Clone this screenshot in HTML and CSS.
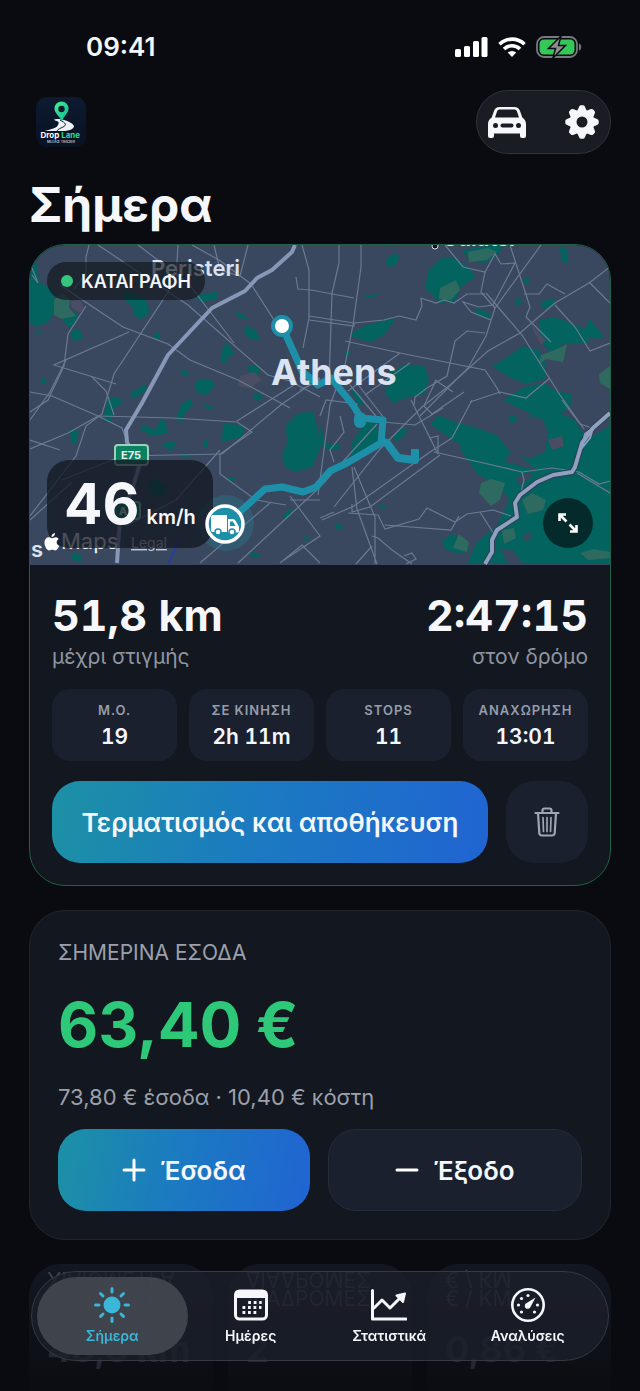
FILE: index.html
```
<!DOCTYPE html>
<html lang="el">
<head>
    <meta charset="UTF-8">
    <meta name="viewport" content="width=device-width, initial-scale=1">
    <title>Drop Lane</title>
    <link rel="stylesheet" href="styles.css">
</head>
<body>
    <div class="status">
        <span class="time">09:41</span>
        <div class="status-icons">
            <svg width="33" height="20" viewBox="0 0 33 20" fill="#fff">
                <rect x="0" y="12" width="6" height="8" rx="1.6"/>
                <rect x="9" y="9" width="6" height="11" rx="1.6"/>
                <rect x="18" y="4" width="6" height="16" rx="1.6"/>
                <rect x="26.500" y="0" width="6" height="20" rx="1.6"/>
            </svg>
            <svg width="28" height="20" viewBox="0 0 28 20" fill="none" stroke="#fff" stroke-width="3.6">
                <path d="M1.500 7.200a18 18 0 0 1 25 0"/>
                <path d="M6 12a11.500 11.500 0 0 1 16 0"/>
                <path d="M14 20l-4.200-4.400a6 6 0 0 1 8.400 0z" fill="#fff" stroke="none"/>
            </svg>
            <svg width="46" height="22" viewBox="0 0 46 22">
                <rect x="1" y="1" width="40" height="20" rx="7" fill="none" stroke="#77797c" stroke-width="1.8"/>
                <rect x="3.500" y="3.500" width="35" height="15" rx="4.500" fill="#34c759"/>
                <path d="M43 7.500c3 1 3 6 0 7z" fill="#77797c"/>
                <path d="M25 0L12.500 12.500h7L17 22 29.500 9.500h-7z" fill="#8b8d90" stroke="#090b10" stroke-width="1.500"/>
            </svg>
        </div>
    </div>

    <header>
        <svg class="logo" viewBox="0 0 50 50">
            <defs>
                <linearGradient id="pin" x1="0" y1="0" x2="1" y2="1">
                    <stop offset="0" stop-color="#4cf08f"/>
                    <stop offset="1" stop-color="#06b99a"/>
                </linearGradient>
                <linearGradient id="logoBg" x1="0" y1="0" x2="0" y2="1">
                    <stop offset="0" stop-color="#0d1a30"/>
                    <stop offset="1" stop-color="#071222"/>
                </linearGradient>
            </defs>
            <rect width="50" height="50" rx="11" fill="url(#logoBg)"/>
            <path d="M21 24c-4-1-4-2 2-2 7 1 14 4 15 7 0 3-5 5-12 5H9c6-2 12-3 13-6 1-2 1-3-1-4z" fill="#eef2f6"/>
            <path d="M24 23c6 3 7 5 3 7-2 1-5 2-6 4" fill="none" stroke="#0a1626" stroke-width="1"/>
            <path d="M26 24c-3-5-7.500-8-7.500-12.500a7 7 0 0 1 14 0C32.500 16 28 19 26 24z" fill="url(#pin)"/>
            <circle cx="25.500" cy="12" r="3.200" fill="#0c1a2c"/>
            <text x="4.500" y="41" class="logo-name" fill="#fff">Drop <tspan fill="#22dd96">Lane</tspan></text>
            <text x="25" y="46" class="logo-sub" fill="#c9d0da">MILEAGE TRACKER</text>
        </svg>
        <div class="tools">
            <button type="button" aria-label="Όχημα">
                <svg width="38" height="31" viewBox="0 0 38 31">
                    <path fill-rule="evenodd" fill="#f5f7fb" d="M12 0h14c3.500 0 5 1.500 6 4l2.300 6.500C36.500 12 38 14 38 17v12a2 2 0 0 1-2 2h-2a2 2 0 0 1-2-2v-2.500H6V29a2 2 0 0 1-2 2H2a2 2 0 0 1-2-2V17c0-3 1.500-5 3.700-6.500L6 4c1-2.500 2.500-4 6-4zM12.500 2.500C10.500 2.500 9.500 3 9 4.500L7 10.500h24l-2-6c-.5-1.500-1.500-2-3.500-2z"/>
                    <circle cx="7.500" cy="18.500" r="2.500" fill="#191d23"/>
                    <circle cx="30.500" cy="18.500" r="2.500" fill="#191d23"/>
                    <rect x="12.500" y="16.500" width="13" height="4" rx="2" fill="#191d23"/>
                </svg>
            </button>
            <button type="button" aria-label="Ρυθμίσεις">
                <svg width="34" height="34" viewBox="-17 -17 34 34" fill="#f5f7fb">
                    <path id="tooth" d="M-4.800-11L-2.800-15.500Q-2.200-16.700-1-16.700H1Q2.200-16.700 2.800-15.500L4.800-11V11L2.800 15.500Q2.200 16.700 1 16.700H-1Q-2.200 16.700-2.800 15.500L-4.800 11z"/>
                    <use href="#tooth" transform="rotate(45)"/>
                    <use href="#tooth" transform="rotate(90)"/>
                    <use href="#tooth" transform="rotate(135)"/>
                    <circle r="12.300"/>
                    <circle r="5.500" fill="#191d23"/>
                </svg>
            </button>
        </div>
    </header>

    <main>
        <h1>Σήμερα</h1>

        <section class="card trip">
            <div class="map">
                <!-- city map -->
                <svg class="map-bg" viewBox="30 245 580 320" preserveAspectRatio="xMidYMid slice">
                    <rect x="30" y="245" width="580" height="320" fill="#39485f"/>
                    <g fill="#03635f">
                        <path d="M30 252l7 12 2 18 14 8 3 15-6 16-14 6-6-4z"/>
                        <path d="M62 316l14-4 2 8-8 8-6-6z"/>
                        <path d="M72 329l8 1 3 7-6 4-6-3z"/>
                        <path d="M124 290l12 4 10 6 4 12-8 7-8-3-2-10-10-9z"/>
                        <path d="M207 294l9-3 2 8-8 1-7 3-8-5 5-4z"/>
                        <path d="M236 311l10 5 1 4-9-3z"/>
                        <path d="M246 325l10 6 4 8-9 1-7-7z"/>
                        <path d="M227 342l5 8 2 5-8 3 1 5-7-1 2-12z"/>
                        <path d="M248 366l10 0 2 6-9 7-2-6z"/>
                        <path d="M198 380l12-1 5 6-8 10-9-2-4-7z"/>
                        <path d="M156 332l4 1-2 8-5-2z"/>
                        <path d="M131 393l14-9 2 5-10 8-7 1z"/>
                        <path d="M180 370l8 1 1 5-7-1z"/>
                        <path d="M108 397l11 0 4 6-8 4-4 16-8-3z"/>
                        <path d="M161 418l5 4 1 11-7 2-4-6z"/>
                        <path d="M141 424l13 5 10 2-3 4-9 1-11-6z"/>
                        <path d="M170 441l6 2-4 8-11-6z"/>
                        <path d="M223 423l22 3-3 11-20 5z"/>
                        <path d="M181 452l10 4-5 2-6-3zM204 440l4 1-1 7-4-1zM227 477l9 1-3 4-6-2zM204 404l11 4-3 2-8-3zM251 552l10 2-4 4-7-2zM253 395l8-2 2 5-8 3z"/>
                        <path d="M182 403l9-4 2 6-7 7-6 12-4-6z"/>
                        <path d="M286 425l12-12 15-1 5 17 2 20-8 18-16 5-11-5-3-12 5-12z"/>
                        <path d="M70 429l9 2-3 14-5-2zM148 482l8-3 9 6 1 8-8 4-8-4z"/>
                        <path d="M72 553l9 2 1 7-10-2zM282 516l8-7 5 2-8 9zM304 535l6 3-4 4z"/>
                        <path d="M320 425l5 18 15 1-1 6-12-1-7-3z"/>
                        <path d="M352 443l14-22 12 2v18l-10 11-18 7z"/>
                        <path d="M385 260l10-7 4 3-3 9-8 2z"/>
                        <path d="M428 271l14-14 12 1 16 10 5 9-14 10-6 14-14 2-16-15 2-10z"/>
                        <path d="M463 250l30-5h10l-4 8-14 10-16-2z"/>
                        <path d="M353 332l14-7 29-7-12 17-14 7-20-6z"/>
                        <path d="M389 373l16-9 19 2 5 12-4 16-16 3-16 6-8-9z"/>
                        <path d="M476 308l13 5 1 7-14-6zM543 301l10-3 2 7-9 4-6-3zM518 298l3 0-1 8-6-2zM524 277l6 2-2 6-5-3z"/>
                        <path d="M540 320l14-3 22 8 16 8-5 10-22 0-14 10-11-12z"/>
                        <path d="M583 331l7-12 14 18-10 2zM560 246l8 4-1 14-6-4z"/>
                        <path d="M492 366l14-8 17-12 16 4 6 12 0 17-19 5-17-7z"/>
                        <path d="M503 400l21-13 20-4 12 8 16 3-2 14-10 6-20 4-30-14z"/>
                        <path d="M540 400h15l6 14 14 6 12 20 23-15v139H467l10-22 20-16 12-25-8-15-24-12-18-27 14-3 22 15 29 8 12 3-16-15 4-30z"/>
                        <path d="M430 424l8-9 17 7 22 6 19 7 15 17-8 12-30-8-14-12-13-9z"/>
                        <path d="M442 541l9-7 14 6 5 12-14 1-12-4zM391 437l12-9 6 2-12 12zM380 503l7 3-4 4zM336 524l8 1-4 5-4-2zM347 350l4 3-3 4-4-3z"/>
                        <path d="M380 293l-6 4-18 1z"/>
                        <path d="M350 388l10 6 4 10-6 1zM42 377l5 3-3 4-4-3zM36 330l5 2-3 4zM507 418l7-3 4 4-6 5z"/>
                    </g>
                    <g fill="#39485f">
                        <path d="M519 424l14-8 10 4 5 12-3 20-16 7-20-10-4-12z"/>
                        <path d="M515 478l14-6 4 4-13 9zM524 534l8-2-2 8-5 2zM500 548l14 3 8 12h-14z"/>
                    </g>
                    <g fill="#2f6a61">
                        <path d="M54 300l9-7 7 7-1 8 7 8-14 3-8-4z"/>
                        <path d="M440 288l16-8 4 10-9 10-12-1z"/>
                        <path d="M468 252l20-4 9 4-10 8-18 2z"/>
                        <path d="M541 355l14-5 12-6-4 18-17-3-7 6z"/>
                        <path d="M599 374l11-8v23l-10-6z"/>
                        <path d="M481 483l10-4 14 4-5 17-9 6-12-13z"/>
                        <path d="M522 500l10-7 14 7-3 10-15 4z"/>
                        <path d="M502 530l12-2 2 10-12 6z"/>
                        <path d="M580 553l14-4 16 3v6l-22 2zM459 534l10 8-2 10-14-4z"/>
                    </g>
                    <g fill="#4a4d63">
                        <path d="M71 301l9-1 4 8-4 5-8-5zM530 324l16 16-5 5zM548 440l14-4 2 10-12 4zM240 376l14-4 8 8-12 8-12-2z"/>
                    </g>

                    <!-- streets -->
                    <g fill="none" stroke="#6b7a94" stroke-width="1.200">
                        <path d="M30 263l8 20-6-8"/>
                        <path d="M89 245l-3 12 0 16-12 16"/>
                        <path d="M98 245l90 60 80 70 22 6 30 16"/>
                        <path d="M60 285l30 20 33 22 45 17 22 16 48 20 52 28"/>
                        <path d="M138 245l50 38 46 60"/>
                        <path d="M178 245l-2 35-62 94-12 40-16 12-10 30-46 60"/>
                        <path d="M192 245l27 15 32 24 23 36 14 20"/>
                        <path d="M214 245l6 25 20 6 8-31"/>
                        <path d="M86 306l-18 28-4 32-16 34-18 12"/>
                        <path d="M129 332l-75 33 62 19"/>
                        <path d="M66 360l-16 32-20 28"/>
                        <path d="M30 392l22 4 46 20-30 17-38 16"/>
                        <path d="M98 416l75 2 64 4 15 10-32 22 0 20 36 26 30 5"/>
                        <path d="M98 416l24 12 3 8M92 377l14 14 8 24"/>
                        <path d="M62 480l60-24 100-2 60-50 38-26"/>
                        <path d="M30 520l42-38M220 450l-44 50-50 26"/>
                        <path d="M237 421l60-38M200 563l70-60M238 563l82-76 57-63"/>
                        <path d="M290 496l30 40-36 24M320 500l-30 0"/>
                        <path d="M302 245l7 25 0 48-6 30M339 245v18l-7 30-3 90"/>
                        <path d="M361 245l0 22-8 58-8 40-15 40-12 90"/>
                        <path d="M296 277l2 12 13 1 43 8M309 316l45 7 30-3 15-4 17 4 6-14-1-8 15 5 8-3 10 3 13-9 18 0"/>
                        <path d="M345 341l55 12 50 10 35 7 12 18 3 6"/>
                        <path d="M309 320l45 6v-4"/>
                        <path d="M445 245l18 22 22 5 10-18 6 10 14-1-22 42-14 2-16-5 8 10 20 8"/>
                        <path d="M485 272l-4 20 14 16"/>
                        <path d="M541 245l-46 63-9 28-18 32-48 48"/>
                        <path d="M510 245l20 62-4 10 25 25"/>
                        <path d="M486 293l36 42 38 60 24 34"/>
                        <path d="M524 294l15 0 8-10 18 10"/>
                        <path d="M610 267l-21 16-34 20-35 30-32 18-38 34-28 22-42 42-46 58"/>
                        <path d="M555 305l20 22 15 24 20-8M589 282l21 21"/>
                        <path d="M485 333l-18-2-12 10-8 35-20 12-12 9-1 8"/>
                        <path d="M410 363l-45 32M400 353l-52 38M350 385l30 36M356 382l28 36M436 380l-12 26 8 8 32-22"/>
                        <path d="M470 402l30-10 26 6 24-20M435 380l18 12"/>
                        <path d="M472 400l-20 38-22 14-76 54-32 14"/>
                        <path d="M440 455l-70 52-18 5v-8M430 438l8 16 0-18z"/>
                        <path d="M443 408l-28 17-32-3M411 400l8 16 12 24"/>
                        <path d="M434 452l54 12 34 8 30-4 27 4 20 12 11-3M577 473l33 20"/>
                        <path d="M522 472l2 8-4 16"/>
                        <path d="M352 467l5 42 20 55M354 467l15 36 6 14 0 47"/>
                        <path d="M348 513l30 2 7 14 34-10 8-11 28 14 12-8 26-4 18 6M385 525l66 5 8-14"/>
                        <path d="M480 512l14 22M372 536l6 2 14 12 20 14M356 564l16-18M404 556l8-3 4 6-10 5"/>
                        <path d="M562 400l18 24 12 4M30 440l30 10M300 390l20-10M320 416l6-16 32 4"/>
                        <path d="M340 416l4 16-14 18 4 12M320 518l14-6M280 563l22-18 18 18"/>
                    </g>

                    <!-- motorways -->
                    <g fill="none" stroke-linejoin="round">
                        <path d="M295 245l-3 7-20 18-15 8-12 13-33 17-44 47-26 48-16 27 1 12 12 25-7 23-12 27-3 46" stroke="#8797b8" stroke-width="4"/>
                        <path d="M610 413l-17 15-11 15-7 24-3 5-19 3-16 7-17 13-5 8 2 14-20 13-5 10v12l-7 12" stroke="#2f3d55" stroke-width="6"/>
                        <path d="M610 413l-17 15-11 15-7 24-3 5-19 3-16 7-17 13-5 8 2 14-20 13-5 10v12l-7 12" stroke="#8fa1c0" stroke-width="4"/>
                        <path d="M593 428l-8 6-3 14 8-10z" stroke="#8fa1c0" stroke-width="2"/>
                        <path d="M180 538l-12 26" stroke="#263e9e" stroke-width="2"/>
                    </g>

                    <!-- driven route -->
                    <g fill="none" stroke="#1e8fa8" stroke-width="7" stroke-linejoin="round">
                        <path d="M282 326l20 45 16 14 13-7 22 27 8 13 22 2-2 23-34 20-17 8-14 16-13 5-21-5-17 2-22 20-16 14"/>
                        <path d="M381 441l6 2 11 15 17 2v-11" stroke-width="8"/>
                        <path d="M360 418v4" stroke-width="12" stroke-linecap="round"/>
                    </g>
                    <circle cx="226" cy="523" r="28" fill="#1e8fa8" opacity=".25"/>
                    <circle cx="282" cy="326" r="9" fill="#fff" stroke="#1e8fa8" stroke-width="4"/>

                    <g fill="#dbe3f0">
                        <text x="151" y="276" class="town">Peristeri</text>
                        <text x="271" y="385" class="city">Athens</text>
                        <text x="442" y="246" class="town">Galatsi</text>
                        <text x="31" y="557" class="town">s</text>
                    </g>
                    <circle cx="435" cy="246" r="3" fill="#10151c" stroke="#dbe3f0" stroke-width="1"/>

                    <rect x="115" y="445" width="33" height="20" rx="3" fill="#0b8161" stroke="#9fd0bd" stroke-width="2"/>
                    <text x="131" y="459" class="shield" fill="#e8f3ee">E75</text>
                    <rect x="112" y="502" width="28" height="17" rx="3" fill="#0b8161" stroke="#9fd0bd" stroke-width="2"/>
                    <text x="123" y="515" class="shield" fill="#e8f3ee">A</text>

                    <text x="61" y="549" class="maps" fill="#f1f3f6">Maps</text>
                    <text x="131" y="548" class="legal" fill="#c6ccd6">Legal</text>
                </svg>

                <div class="recording"><i class="dot"></i>ΚΑΤΑΓΡΑΦΗ</div>
                <div class="speed"><b>46</b><span>km/h</span></div>

                <svg class="apple" viewBox="0 0 16 18" fill="#fff">
                    <path d="M11 0c.2 2-1.500 4-3.500 4C7.300 2 9 .3 11 0zM8 5.200c1 0 2-1 3.500-1 1.300 0 2.500.7 3.200 1.700-3 1.800-2.500 5.600.5 6.900-.8 2.300-2.300 4.700-4 4.700-1.200 0-1.600-.7-3-.7s-1.900.7-3 .7C3 17.500.5 13.500.5 9.800.5 6.200 2.700 4.300 5 4.300c1.300 0 2.200.9 3 .9z"/>
                </svg>

                <svg class="truck" viewBox="0 0 42 42">
                    <circle cx="21" cy="21" r="18" fill="#1e8fa8" stroke="#fff" stroke-width="3.500"/>
                    <path d="M9 12h14v17H9a2 2 0 0 1-2-2V14a2 2 0 0 1 2-2zM24 16h4.500c1.500 0 2.300.7 3 1.800l3 5c.4.700.5 1.200.5 2V28a1.500 1.500 0 0 1-1.500 1.500H24z" fill="#fff"/>
                    <path d="M26 18.500h3l2.500 4.500H26z" fill="#1e8fa8"/>
                    <circle cx="14" cy="29" r="3" fill="#fff" stroke="#1e8fa8" stroke-width="1.500"/>
                    <circle cx="28" cy="29" r="3" fill="#fff" stroke="#1e8fa8" stroke-width="1.500"/>
                </svg>

                <button type="button" class="expand" aria-label="Μεγέθυνση">
                    <svg width="22" height="22" viewBox="0 0 22 22" fill="none" stroke="#fff" stroke-width="2.600">
                        <path d="M2.500 9V2.500H9M3 3l6.500 6.500M19.500 13v6.500H13M19 19l-6.500-6.500"/>
                    </svg>
                </button>
            </div>

            <div class="trip-body">
                <div class="totals">
                    <div>
                        <strong>51,8 km</strong>
                        <p>μέχρι στιγμής</p>
                    </div>
                    <div class="right">
                        <strong>2:47:15</strong>
                        <p>στον δρόμο</p>
                    </div>
                </div>
                <div class="tiles">
                    <div class="tile"><span>Μ.Ο.</span><b>19</b></div>
                    <div class="tile"><span>ΣΕ ΚΙΝΗΣΗ</span><b>2h 11m</b></div>
                    <div class="tile"><span>STOPS</span><b>11</b></div>
                    <div class="tile"><span>ΑΝΑΧΩΡΗΣΗ</span><b>13:01</b></div>
                </div>
                <div class="actions">
                    <button type="button" class="btn primary">Τερματισμός και αποθήκευση</button>
                    <button type="button" class="btn trash" aria-label="Διαγραφή">
                        <svg width="26" height="30" viewBox="0 0 26 30" fill="none" stroke="#a0a5b1" stroke-width="2.200" stroke-linecap="round" stroke-linejoin="round">
                            <path d="M1.500 6h23M8.500 6V3.500a2 2 0 0 1 2-2h5a2 2 0 0 1 2 2V6M4 6l1.300 20a2.500 2.500 0 0 0 2.500 2.500h10.400a2.500 2.500 0 0 0 2.500-2.500L22 6"/>
                            <path d="M9 10.500l.5 14M13 10.500v14M17 10.500l-.5 14" stroke-width="1.700"/>
                        </svg>
                    </button>
                </div>
            </div>
        </section>

        <section class="card income">
            <h2>ΣΗΜΕΡΙΝΑ ΕΣΟΔΑ</h2>
            <div class="amount">63,40 €</div>
            <p>73,80 € έσοδα · 10,40 € κόστη</p>
            <div class="pair">
                <button type="button" class="btn primary">
                    <svg width="24" height="24" viewBox="0 0 24 24" stroke="#fff" stroke-width="3" stroke-linecap="round"><path d="M2 12h20M12 2v20"/></svg>
                    Έσοδα
                </button>
                <button type="button" class="btn plain">
                    <svg width="24" height="24" viewBox="0 0 24 24" stroke="#fff" stroke-width="3" stroke-linecap="round"><path d="M2 12h20"/></svg>
                    Έξοδο
                </button>
            </div>
        </section>

        <section class="week">
            <div class="mini"><span>ΧΙΛΙΟΜΕΤΡΑ</span><b>48,3 km</b></div>
            <div class="mini"><span>ΔΙΑΔΡΟΜΕΣ</span><b>2</b></div>
            <div class="mini"><span>€ / KM</span><b>0,86 €</b></div>
        </section>
    </main>

    <nav>
        <a href="#today" class="active">
            <svg width="36" height="36" viewBox="-18 -18 36 36" fill="#3ab7d8" stroke="#3ab7d8" stroke-width="3" stroke-linecap="round">
                <circle r="8.500" stroke="none"/>
                <path d="M0-16.500v3.500M0 16.500v-3.500M-16.500 0h3.500M16.500 0h-3.500M-11.500-11.500l2.500 2.500M11.500-11.500l-2.500 2.500M-11.500 11.500l2.500-2.500M11.500 11.500l-2.500-2.500"/>
            </svg>
            Σήμερα
        </a>
        <a href="#days">
            <svg width="36" height="36" viewBox="0 0 36 36">
                <rect x="2.500" y="4" width="31" height="28" rx="4" fill="none" stroke="#f5f7fb" stroke-width="3"/>
                <path d="M2 11V7a4 4 0 0 1 4-4h24a4 4 0 0 1 4 4v4z" fill="#f5f7fb"/>
                <path d="M15.200 15.500h13.500M9.500 20.500h19M9.500 25.500h14" stroke="#f5f7fb" stroke-width="2.800" stroke-dasharray="2.800 2.700"/>
            </svg>
            Ημέρες
        </a>
        <a href="#stats">
            <svg width="36" height="36" viewBox="0 0 36 36" fill="none" stroke="#f5f7fb" stroke-width="3" stroke-linecap="round" stroke-linejoin="round">
                <path d="M1.500 3.500v28.500H35"/>
                <path d="M3 21l8-8 8 8 10-10"/>
                <path d="M25.500 8.500l8.500-2-2 8.500z" fill="#f5f7fb" stroke-width="2"/>
            </svg>
            Στατιστικά
        </a>
        <a href="#insights">
            <svg width="36" height="36" viewBox="0 0 36 36" fill="#f5f7fb">
                <circle cx="18" cy="18" r="15.700" fill="none" stroke="#f5f7fb" stroke-width="2.600"/>
                <path d="M25.500 10.500l-5 9.500a3 3 0 1 1-3.800-4z"/>
                <circle cx="8.500" cy="18" r="1.600"/>
                <circle cx="11.500" cy="11.500" r="1.600"/>
                <circle cx="18" cy="8.500" r="1.600"/>
                <circle cx="27.500" cy="18" r="1.600"/>
                <circle cx="11.500" cy="25" r="1.600"/>
                <circle cx="24.500" cy="25" r="1.600"/>
            </svg>
            Αναλύσεις
        </a>
    </nav>
</body>
</html>
```
FILE: styles.css
```
*{
    box-sizing:border-box;
    margin:0;
    padding:0;
}
body{
    height:100vh;
    display:flex;
    flex-direction:column;
    overflow:hidden;
    background:#090b10;
    color:#f5f7fb;
    font-family:Inter, "Noto Sans", sans-serif;
}
button{
    border:0;
    background:none;
    color:inherit;
    font:inherit;
    cursor:pointer;
}
svg{
    display:block;
    flex:none;
}

/* status bar */
.status{
    display:flex;
    justify-content:space-between;
    align-items:center;
    padding:31px 58px 0 86px;
}
.time{
    font-size:26px;
    line-height:32px;
    font-weight:600;
}
.status-icons{
    display:flex;
    align-items:center;
    gap:10px;
}

/* header */
header{
    display:flex;
    justify-content:space-between;
    align-items:center;
    padding:27px 29px 0 36px;
}
.logo{
    width:50px;
    height:50px;
}
.logo-name{
    font-size:8px;
    font-weight:700;
}
.logo-sub{
    font-size:3px;
    font-weight:600;
    text-anchor:middle;
}
.tools{
    display:flex;
    justify-content:space-between;
    align-items:center;
    width:135px;
    height:64px;
    padding:0 11px;
    border:1px solid #303439;
    border-radius:32px;
    background:#191d23;
}

main{
    flex:1;
    min-height:0;
    padding:24px 29px 0;
    overflow-y:auto;
    scrollbar-width:none;
}
h1{
    height:66px;
    font-size:48px;
    line-height:54px;
    font-weight:700;
}
.card{
    border:1px solid #20252e;
    border-radius:36px;
    background:#13171f;
    overflow:hidden;
}
.trip{
    border-color:#1f6048;
}

/* map */
.map{
    position:relative;
    height:320px;
}
.map-bg{
    width:100%;
    height:100%;
}
.town{
    font-size:22px;
    font-weight:600;
}
.city{
    font-size:36px;
    font-weight:700;
}
.shield{
    font-size:11px;
    font-weight:700;
    text-anchor:middle;
}
.maps{
    font-size:22px;
}
.legal{
    font-size:14px;
    text-decoration:underline;
}
.recording{
    position:absolute;
    top:17px;
    left:17px;
    display:flex;
    align-items:center;
    gap:8px;
    height:38px;
    padding:0 14px;
    border-radius:19px;
    background:rgba(18, 22, 30, 0.68);
    font-size:18px;
    font-weight:600;
}
.dot{
    width:12px;
    height:12px;
    border-radius:50%;
    background:#34c77b;
}
.speed{
    position:absolute;
    left:17px;
    bottom:17px;
    display:flex;
    align-items:baseline;
    gap:7px;
    height:88px;
    padding:0 17px;
    border-radius:22px;
    background:rgba(18, 22, 32, 0.74);
    line-height:88px;
}
.speed b{
    font-size:57px;
}
.speed span{
    font-size:20px;
    font-weight:600;
}
.apple{
    position:absolute;
    left:14px;
    bottom:14px;
    width:16px;
    height:18px;
}
.truck{
    position:absolute;
    left:174px;
    bottom:20px;
    width:42px;
    height:42px;
}
.expand{
    position:absolute;
    right:17px;
    bottom:17px;
    display:flex;
    align-items:center;
    justify-content:center;
    width:50px;
    height:50px;
    border-radius:50%;
    background:#052a2c;
}

/* trip numbers */
.trip-body{
    padding:24px 22px 22px;
}
.totals{
    display:flex;
    justify-content:space-between;
}
.totals strong{
    display:block;
    font-size:43px;
    line-height:52px;
    font-weight:700;
    font-variant-numeric:tabular-nums;
}
.totals p{
    font-size:21px;
    line-height:32px;
    color:#8f95a1;
}
.right{
    text-align:right;
}
.tiles{
    display:grid;
    grid-template-columns:repeat(4, 1fr);
    gap:12px;
    margin-top:16px;
}
.tile{
    display:flex;
    flex-direction:column;
    align-items:center;
    height:72px;
    padding-top:10px;
    border-radius:18px;
    background:#1a202e;
}
.tile span{
    font-size:13px;
    line-height:22px;
    font-weight:600;
    letter-spacing:1px;
    color:#969ca9;
}
.tile b{
    font-size:21px;
    line-height:32px;
    font-weight:600;
    font-variant-numeric:tabular-nums;
}
.actions{
    display:flex;
    gap:18px;
    margin-top:20px;
}
.btn{
    display:flex;
    flex:1;
    align-items:center;
    justify-content:center;
    gap:14px;
    height:82px;
    border-radius:28px;
    font-size:26px;
    font-weight:600;
    white-space:nowrap;
}
.primary{
    background:linear-gradient(100deg, #1c91a5, #1b7bc0 45%, #2064d2);
}
.trash{
    flex:0 0 82px;
    background:#1a202e;
}
.plain{
    border:1px solid #262c39;
    background:#1a202e;
}

/* income */
.income{
    margin-top:24px;
    padding:26px 28px 28px;
}
.income h2{
    font-size:21px;
    line-height:32px;
    font-weight:400;
    color:#9ba0ac;
}
.amount{
    margin-top:16px;
    font-size:62px;
    line-height:80px;
    font-weight:700;
    color:#2dc878;
}
.income p{
    margin-top:16px;
    font-size:22px;
    line-height:32px;
    color:#9ba0ac;
}
.pair{
    display:flex;
    gap:18px;
    margin-top:16px;
}

/* next row, running under the tab bar */
.week{
    display:grid;
    grid-template-columns:repeat(3, 1fr);
    gap:15px;
    margin-top:24px;
}
.mini{
    height:150px;
    padding:24px 18px;
    border-radius:32px;
    background:linear-gradient(#131722, #0b0d12 120px);
    white-space:nowrap;
}
.mini span{
    display:block;
    font-size:21px;
    line-height:22px;
    color:#3c404b;
    -webkit-box-reflect:above -2px;
}
.mini b{
    display:block;
    margin-top:16px;
    font-size:36px;
    line-height:46px;
    color:#25282f;
}

/* tab bar */
nav{
    position:fixed;
    left:31px;
    right:31px;
    bottom:30px;
    display:grid;
    grid-template-columns:repeat(4, 1fr);
    height:90px;
    padding:0 11px;
    border:1px solid #353944;
    border-radius:45px;
    background:rgba(28, 31, 42, 0.8);
}
nav a{
    position:relative;
    display:flex;
    flex-direction:column;
    align-items:center;
    padding-top:15px;
    font-size:14px;
    line-height:26px;
    font-weight:600;
    color:#f5f7fb;
    text-decoration:none;
}
nav .active{
    color:#3ab7d8;
}
nav .active::before{
    content:"";
    position:absolute;
    z-index:-1;
    inset:5px -6px;
    border-radius:40px;
    background:rgba(66, 70, 80, 0.92);
}
```
